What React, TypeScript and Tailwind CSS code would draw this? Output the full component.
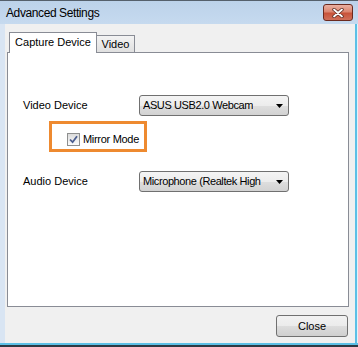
import { ReactNode } from 'react';

const ui = "font-['Liberation_Sans',Arial,sans-serif] text-[11px] text-black";

function CloseGlyph() {
  return (
    <svg width="12" height="10" viewBox="0 0 12 10">
      <path d="M2 1.5 L10 8.5 M10 1.5 L2 8.5" stroke="#5a2a22" strokeWidth="3.4" strokeLinecap="round" />
      <path d="M2 1.5 L10 8.5 M10 1.5 L2 8.5" stroke="#ffffff" strokeWidth="1.8" strokeLinecap="round" />
    </svg>
  );
}

function Combo({ value }: { value: string }) {
  return (
    <div className="flex h-[21px] w-[150px] items-center justify-between rounded-[3px] border border-[#707070] bg-[linear-gradient(to_bottom,#f4f4f4_0%,#ececec_50%,#dedede_51%,#d2d2d2_100%)] pl-[3px] pr-[5px]">
      <span className="truncate tracking-[-0.4px]">{value}</span>
      <svg width="7" height="4" viewBox="0 0 7 4" className="shrink-0">
        <path d="M0 0 H7 L3.5 4 Z" fill="#000" />
      </svg>
    </div>
  );
}

function Row({ label, children }: { label: string; children: ReactNode }) {
  return (
    <div className="flex items-center pl-[15px]">
      <span className="w-[116px]">{label}</span>
      {children}
    </div>
  );
}

export default function App() {
  return (
    <div className={`flex h-[347px] w-[358px] flex-col overflow-hidden bg-[#d9e5f3] ${ui}`}>
      {/* title bar */}
      <div className="h-px bg-[#55606c]" />
      <div className="flex h-[23px] items-start justify-between bg-[linear-gradient(to_bottom,#bcd2ea,#c6daef)] pl-[6px] pr-[5px]">
        <span className="mt-[3px] font-['Liberation_Sans',Arial,sans-serif] text-[12px] tracking-[-0.4px] text-black">
          Advanced Settings
        </span>
        <button
          type="button"
          className="mt-[3px] flex h-[17px] w-[30px] items-center justify-center rounded-[3px] border border-[#6b2a1f] bg-[linear-gradient(to_bottom,#eab0a2_0%,#dc8670_45%,#c8533a_55%,#d0705a_100%)]"
        >
          <CloseGlyph />
        </button>
      </div>

      {/* body */}
      <div className="flex flex-1">
        <div className="w-[5px] bg-[#d9e5f3]" />
        <div className="flex flex-1 flex-col bg-[#f0f0f0] pt-[8px]">
          {/* tabs */}
          <div className="relative z-10 -mb-px ml-[4px] flex h-[21px] items-end">
            <div className="flex h-[21px] w-[88px] items-center justify-center border border-b-0 border-[#898c95] bg-white pb-[1px]">
              Capture Device
            </div>
            <div className="flex h-[18px] w-[38px] items-center justify-center border border-l-0 border-[#898c95] bg-[linear-gradient(to_bottom,#f3f3f3,#e0e0e0)]">
              Video
            </div>
          </div>

          {/* panel */}
          <div className="ml-[2px] flex h-[255px] w-[342px] flex-col border border-[#898c95] bg-white pt-[42px]">
            <Row label="Video Device">
              <Combo value="ASUS USB2.0 Webcam" />
            </Row>

            <div className="ml-[41px] mt-[5px] flex h-[31px] w-[98px] items-center border-[3px] border-[#ee8a30] pl-[15px] pt-[5px]">
              <div className="flex h-[13px] w-[13px] items-center justify-center border border-[#8e8f8f] bg-[linear-gradient(to_bottom,#dcdcdc,#fbfbfb)]">
                <svg width="9" height="9" viewBox="0 0 9 9">
                  <path d="M1 4.5 L3.6 7.2 L8 1.2" fill="none" stroke="#4b5d8f" strokeWidth="1.8" />
                </svg>
              </div>
              <span className="ml-[3px] tracking-[-0.3px]">Mirror Mode</span>
            </div>

            <div className="mt-[19px]">
              <Row label="Audio Device">
                <Combo value="Microphone (Realtek High" />
              </Row>
            </div>
          </div>

          <div className="mt-[8px] flex justify-end pr-[7px]">
            <button
              type="button"
              className="h-[22px] w-[72px] rounded-[3px] border border-[#707070] bg-[linear-gradient(to_bottom,#f2f2f2_0%,#ebebeb_50%,#dddddd_51%,#cfcfcf_100%)] text-[11px]"
            >
              Close
            </button>
          </div>
        </div>
        <div className="flex w-[3px]">
          <div className="w-[2px] bg-[#5cc0e6]" />
          <div className="w-px bg-[#e6f0f8]" />
        </div>
      </div>

      {/* bottom frame */}
      <div className="h-[2px] bg-[#5cc0e6]" />
      <div className="h-[2px] bg-[#2d3a44]" />
    </div>
  );
}
